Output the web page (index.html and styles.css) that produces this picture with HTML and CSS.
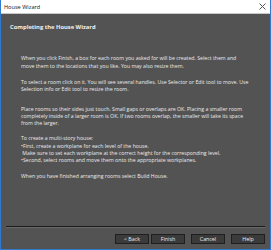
FILE: index.html
```html
<!DOCTYPE html>
<html>
<head>
<meta charset="utf-8">
<link rel="stylesheet" href="styles.css">
</head>
<body>
<div class="window">
  <div class="titlebar">
    <span class="title">House Wizard</span>
    <svg class="close" width="7" height="7" viewBox="0 0 7 7"><path d="M0.5 0.5L6.5 6.5M6.5 0.5L0.5 6.5" stroke="#555" stroke-width="1"/></svg>
  </div>
  <div class="content">
    <div class="heading">Completing the House Wizard</div>
    <div class="body">
      <p class="p1">When you click Finish, a box for each room you asked for will be created. Select them and move them to the locations that you like. You may also resize them.</p>
      <p class="p2">To select a room click on it. You will see several handles. Use Selector or Edit tool to move. Use Selection info or Edit tool to resize the room.</p>
      <p class="p3">Place rooms so their sides just touch. Small gaps or overlaps are OK. Placing a smaller room completely inside of a larger room is OK. If two rooms overlap, the smaller will take its space from the larger.</p>
      <p class="p4">To create a multi-story house:<br>•First, create a workplane for each level of the house.<br>&nbsp;Make sure to set each workplane at the correct height for the corresponding level.<br>•Second, select rooms and move them onto the appropriate workplanes.</p>
      <p class="p5">When you have finished arranging rooms select Build House.</p>
    </div>
    <div class="footer">
      <div class="sep"></div>
      <div class="buttons">
        <button class="btn">&lt; Back</button>
        <button class="btn btn-finish">Finish</button>
        <button class="btn btn-gap">Cancel</button>
        <button class="btn btn-gap">Help</button>
      </div>
    </div>
  </div>
</div>
</body>
</html>
```
FILE: styles.css
```css
* { box-sizing: border-box; }
html, body { margin: 0; padding: 0; }
body { width: 271px; height: 250px; overflow: hidden; font-family: "Open Sans", "Noto Sans", sans-serif; }
.window {
  width: 271px; height: 250px;
  display: flex; flex-direction: column;
  border: 1px solid #2e7bcf; border-top: none;
  background: #535353;
}
.titlebar {
  height: 14px; background: #fff;
  border-bottom: 1px solid #c8c8c8;
  display: flex; align-items: center; justify-content: space-between;
  padding: 0 4px 0 3px;
}
.title { font-size: 5.6px; color: #111; }
.close { display: block; }
.content { flex: 1; display: flex; flex-direction: column; }
.heading {
  font-size: 5.8px; font-weight: bold; color: #f0f0f0;
  padding: 9.5px 0 0 9px; line-height: 7px;
}
.body { width: 248px; padding: 0 0 0 20px; color: #ececec; font-size: 5.2px; line-height: 7.3px; }
.body p { margin: 0; }
.body .p1 { margin-top: 24.8px; }
.body .p2 { margin-top: 8.7px; }
.body .p3 { margin-top: 12.7px; }
.body .p4 { margin-top: 7.7px; }
.body .p5 { margin-top: 8.2px; }
.footer { margin-top: auto; padding: 0 5px 5px 5px; }
.sep { height: 2px; border-top: 1px solid #1a1a1a; border-bottom: 1px solid #6a6a6a; }
.buttons { display: flex; justify-content: flex-end; margin-top: 6px; }
.btn {
  width: 34px; height: 10px; padding: 0;
  background: #3b3b3b; border: 1px solid #1f1f1f; color: #eee;
  font-family: "Open Sans", "Noto Sans", sans-serif; font-size: 5.3px; line-height: 8px;
}
.btn-finish { margin-left: 2px; }
.btn-gap { margin-left: 6px; }
```
